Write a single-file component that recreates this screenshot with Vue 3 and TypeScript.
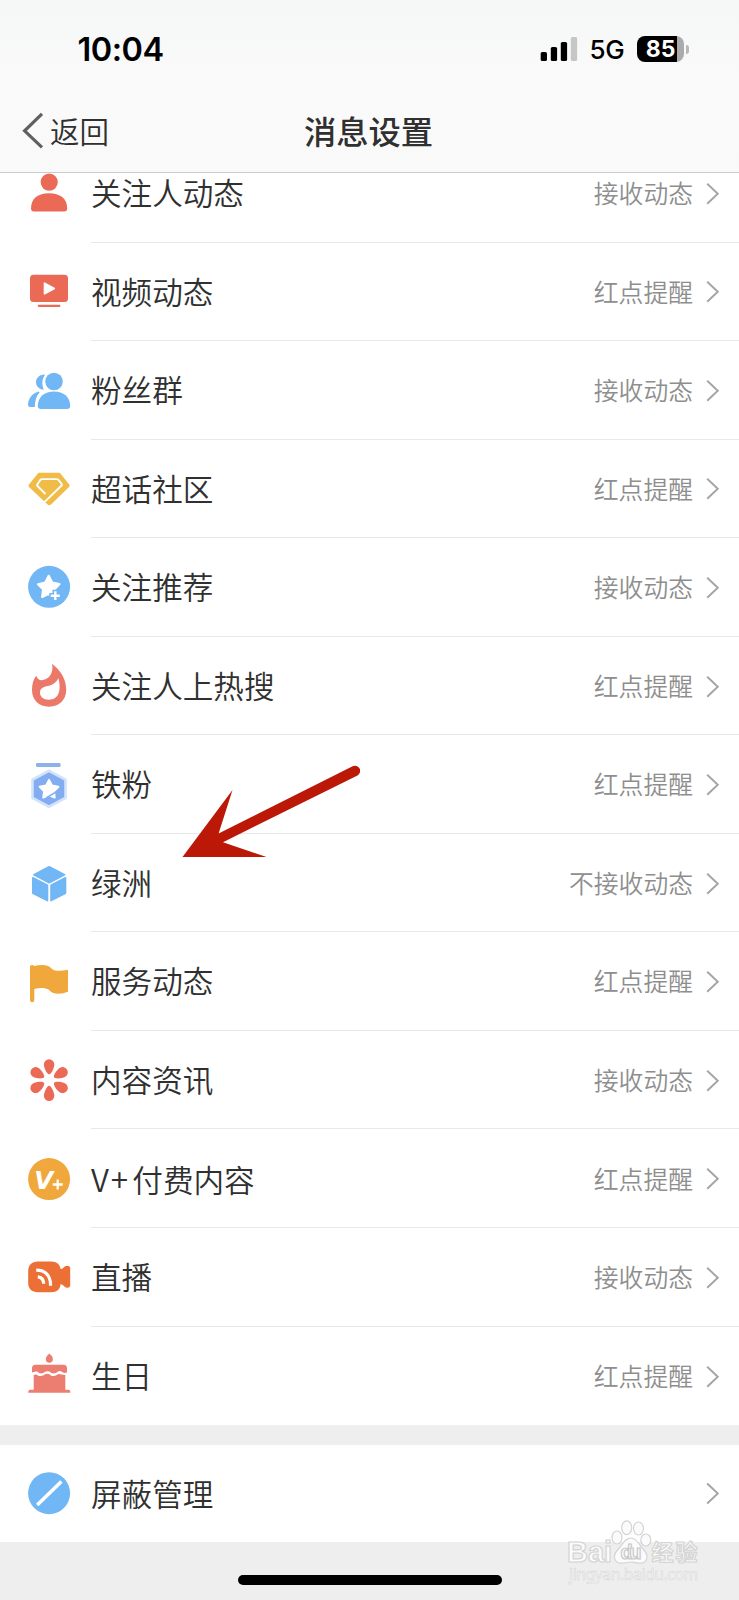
<script setup lang="ts">
interface Row {
  icon: string
  prefix?: string
  label: string
  value: string
}

const rows: Row[] = [
  { icon: 'person', label: '关注人动态', value: '接收动态' },
  { icon: 'video', label: '视频动态', value: '红点提醒' },
  { icon: 'group', label: '粉丝群', value: '接收动态' },
  { icon: 'diamond', label: '超话社区', value: '红点提醒' },
  { icon: 'star', label: '关注推荐', value: '接收动态' },
  { icon: 'flame', label: '关注人上热搜', value: '红点提醒' },
  { icon: 'medal', label: '铁粉', value: '红点提醒' },
  { icon: 'cube', label: '绿洲', value: '不接收动态' },
  { icon: 'flag', label: '服务动态', value: '红点提醒' },
  { icon: 'flower', label: '内容资讯', value: '接收动态' },
  { icon: 'vplus', prefix: 'V+', label: '付费内容', value: '红点提醒' },
  { icon: 'live', label: '直播', value: '接收动态' },
  { icon: 'cake', label: '生日', value: '红点提醒' },
]
const petals = [0, 60, 120, 180, 240, 300]
</script>

<template>
  <div class="screen">
    <header class="header">
      <div class="status">
        <span class="time">10:04</span>
        <div class="indicators">
          <svg class="signal" width="38" height="26" viewBox="0 0 38 26">
            <rect x="0.7" y="16" width="6.3" height="9" rx="1.6" />
            <rect x="10.8" y="11" width="6.3" height="14" rx="1.6" />
            <rect x="20.8" y="6" width="6.3" height="19" rx="1.6" />
            <rect x="30.8" y="1" width="6.3" height="24" rx="1.6" fill="#c6c6c6" />
          </svg>
          <span class="network">5G</span>
          <div class="battery"><span>85</span></div>
          <i class="battery-cap"></i>
        </div>
      </div>
      <nav class="nav">
        <div class="back">
          <svg width="22" height="38" viewBox="0 0 22 38">
            <path d="M20 2.8 L2.6 19.8 L20 36.3" fill="none" stroke="#606060" stroke-width="3.2" />
          </svg>
          <span>返回</span>
        </div>
        <h1>消息设置</h1>
      </nav>
    </header>

    <main class="list">
      <div v-for="row in rows" :key="row.label" class="row">
        <svg class="icon" width="48" height="48" viewBox="0 0.5 48 48">
          <g v-if="row.icon === 'person'" fill="#eb6a56">
            <circle cx="24.2" cy="13.6" r="8.6" />
            <path d="M6 40 C6 30 13 24.8 24 24.8 S42.2 30 42.2 40 Q42.2 43 39 43 H9 Q6 43 6 40Z" />
          </g>
          <g v-else-if="row.icon === 'video'">
            <rect x="5" y="7.2" width="38" height="27.3" rx="3.5" fill="#eb6a56" />
            <path d="M19.5 15.6 L29.3 21 L19.5 26.4Z" fill="#fff" stroke="#fff" stroke-width="1.6" stroke-linejoin="round" />
            <rect x="12.8" y="37.2" width="22.6" height="2.2" rx="1" fill="#eb6a56" />
          </g>
          <g v-else-if="row.icon === 'group'" fill="#71b6f5">
            <path d="M19.4 9 C14.8 9 11 12.2 11 16.6 C11 20.8 14.2 24 18.8 24.2 C16.7 19 16.8 13.5 20 9.4Z" />
            <circle cx="29" cy="16" r="8.8" />
            <path d="M13.5 26 C7 28 3 33.5 3 39.5 Q3 41.6 5 41.6 H9.8 C10.2 35 11 31 14.6 27Z" />
            <path d="M12.8 40.4 C12.8 31.5 19.5 26 29 26 S45.2 31.5 45.2 40.4 Q45.2 43.4 42 43.4 H16 Q12.8 43.4 12.8 40.4Z" />
          </g>
          <g v-else-if="row.icon === 'diamond'">
            <path d="M13.5 8.2 H34.8 L44.2 20 Q45.2 21.3 44 22.6 L26 40 Q24 41.7 22.3 39.8 L4 22.6 Q2.8 21.3 4 20Z" fill="#f0bb46" />
            <path d="M19.4 37.6 L36.6 21 Q37.3 20.2 36.6 19.4 L33.2 15.2 Q32.7 14.6 31.8 14.6 H17 Q16 14.6 15.4 15.4 L12.3 20 Q11.8 20.8 12.5 21.5 L20 29" fill="none" stroke="#fff" stroke-width="1.9" stroke-linecap="round" />
          </g>
          <g v-else-if="row.icon === 'star'">
            <circle cx="24.1" cy="24.3" r="21" fill="#71b6f5" />
            <path d="M23.7 13.3 L27.2 20 L34.5 21.5 L29.5 26.8 L29 34 L23.7 31.2 L17.2 34.4 L18.1 26.8 L13 21.7 L20.3 20Z" fill="#fff" stroke="#fff" stroke-width="2.2" stroke-linejoin="round" />
            <path d="M30.3 27.3 V40 M24.3 33.2 H36.5" stroke="#71b6f5" stroke-width="5.6" />
            <path d="M30.3 28.8 V37.6 M25.8 33.2 H34.8" stroke="#fff" stroke-width="2.4" />
          </g>
          <g v-else-if="row.icon === 'flame'">
            <path d="M27 2.3 C35 8.5 41.2 17 41.2 28.3 C41.2 38.5 34.3 45.2 24 45.2 S7 38.5 7 28.3 C7 22.5 8.5 17.5 11.2 14.2 C12.8 18.5 15.6 19.2 19 18.3 C26 16.3 28.6 9.2 27 2.3Z" fill="#eb7869" />
            <path d="M33.5 16.7 C36 27 35 38.2 23.6 38.2 C18.5 38.2 15 35 15 31.2 C15 26.5 18.5 25.5 23 24.6 C27.8 23.6 31.4 20.5 33.5 16.7Z" fill="#fff" />
          </g>
          <g v-else-if="row.icon === 'medal'">
            <rect x="11" y="2.6" width="24.5" height="3.8" rx="1.2" fill="#8bb3e8" />
            <path d="M24 10 L40.8 19 V37.5 L24 46.5 L7.2 37.5 V19Z" fill="#d2e3fb" stroke="#d2e3fb" stroke-width="2" stroke-linejoin="round" />
            <path d="M24 12.8 L38.4 20.5 V36 L24 43.7 L9.6 36 V20.5Z" fill="#82adf0" stroke="#82adf0" stroke-width="1.6" stroke-linejoin="round" />
            <path d="M24 19.4 L27 25 L33.4 26.3 L29 30.8 L29.7 37 L24 34.5 L18.3 37 L19.1 30.8 L14.7 26.3 L21.1 25Z" fill="#fff" stroke="#fff" stroke-width="2" stroke-linejoin="round" />
            <path d="M21.5 37.2 L34.5 29.5" stroke="#82adf0" stroke-width="1.5" />
          </g>
          <g v-else-if="row.icon === 'cube'" fill="#71b6f5" stroke="#71b6f5" stroke-width="1.8" stroke-linejoin="round">
            <path d="M24.2 8.4 L39.5 16.3 L24.2 24.2 L9 16.3Z" />
            <path d="M7.9 19.3 L22.4 26.7 V42 L7.9 34.6Z" />
            <path d="M40.4 19.3 L26.1 26.7 V42 L40.4 34.6Z" />
          </g>
          <path
            v-else-if="row.icon === 'flag'"
            d="M5 9.2 Q5 7.4 7 7.4 Q8.5 7.4 9 8.6 C17 6.5 24 7 27.5 12 C31 14 37 13.2 42 12.2 Q43 12 43 13.2 V34.3 C36 37.2 27 37.3 24 32.3 C20 30 14 30.4 9.3 31.5 V42.8 Q9.3 44.8 7.2 44.8 Q5 44.8 5 42.8Z"
            fill="#f0a73c"
          />
          <g v-else-if="row.icon === 'flower'" fill="#eb6a56">
            <path
              v-for="angle in petals"
              :key="angle"
              :transform="`rotate(${angle} 24.1 24.6)`"
              d="M24.1 18.9 C22 18.9 18.9 12.5 18.9 9 A5.2 5.2 0 0 1 29.3 9 C29.3 12.5 26.2 18.9 24.1 18.9Z"
            />
          </g>
          <g v-else-if="row.icon === 'vplus'">
            <circle cx="24.1" cy="24.6" r="21" fill="#f0a73c" />
            <text x="9.2" y="34.3" class="v-mark">V</text>
            <path d="M32.7 25 V35 M27.7 30 H37.7" stroke="#fff" stroke-width="2.3" />
          </g>
          <g v-else-if="row.icon === 'live'">
            <path d="M13 9 H26 C32 9 35 12 35.6 16.5 C38 17 39 13.5 42 13.3 Q45.2 13.2 45.2 16 V32.5 Q45.2 35.5 42 35.2 C39 34.8 38 31.5 35.6 31.8 C35 37 32 39.8 26 39.8 H13 C6.5 39.8 3.2 36 3.2 30.5 V18.5 C3.2 13 6.5 9 13 9Z" fill="#ec7036" />
            <path d="M11.2 17.7 C20.5 17.7 25.6 23 25.6 33.2 M12.8 24.3 C16.8 24.5 18.5 26.5 18.7 31.2" fill="none" stroke="#fff" stroke-width="3.2" />
          </g>
          <g v-else-if="row.icon === 'cake'" fill="#eb7d71">
            <path d="M24.3 2 C26.2 3.5 27.9 5.2 27.9 7.6 A3.5 3.7 0 0 1 20.8 7.6 C20.8 5.2 22.6 3.5 24.3 2Z" />
            <path d="M10.5 13.3 H38.5 Q42 13.3 42 16.8 V21 Q38.5 22.2 36.5 20 Q34 18.7 31 21.6 Q27.3 23 24.3 20 Q21 18.8 18.2 21.6 Q14.5 22.8 12.2 20 Q10 19.8 7 21 V16.8 Q7 13.3 10.5 13.3Z" />
            <path d="M8.7 23.4 Q11.3 22.4 13.2 24.2 Q17 25.3 20.6 22.6 Q24 21.6 26.2 24.2 Q30 25.2 33.4 22.5 Q36.6 22.8 40.3 23.5 V38.3 H43.4 Q45.4 38.3 45.4 41.3 H3.2 Q3.2 38.3 5.2 38.3 H8.7Z" />
          </g>
        </svg>
        <div class="body">
          <span class="label"><span v-if="row.prefix" class="prefix">{{ row.prefix }}</span>{{ row.label }}</span>
          <span class="value">{{ row.value }}</span>
          <svg class="chevron" width="14" height="24" viewBox="0 0 14 24">
            <path d="M1.2 2.8 L11.8 12.8 L1.2 22.8" fill="none" stroke="#a4a4a4" stroke-width="1.9" />
          </svg>
        </div>
      </div>
    </main>

    <section class="block-row row">
      <svg class="icon" width="48" height="48" viewBox="0 0 48 48">
        <circle cx="24.1" cy="24.2" r="21" fill="#71b6f5" />
        <path d="M12.2 36 L36.4 12.4" stroke="#fff" stroke-width="3.5" />
      </svg>
      <div class="body">
        <span class="label">屏蔽管理</span>
        <svg class="chevron" width="14" height="24" viewBox="0 0 14 24">
          <path d="M1.2 2.5 L11.8 12.5 L1.2 22.5" fill="none" stroke="#a4a4a4" stroke-width="1.9" />
        </svg>
      </div>
    </section>

    <svg class="pointer" width="180" height="100" viewBox="0 0 180 100">
      <path d="M2.5 97 L52.5 30 L38.6 73.5 L172.6 6.3 A5.1 5.1 0 0 1 177.5 15.4 L43 82.2 L86.5 97Z" fill="#bb1808" />
    </svg>

    <svg class="watermark" width="139" height="70" viewBox="0 0 139 70">
      <g fill="#fbfbfb" stroke="#d4d4d4" stroke-width="1.2">
        <ellipse cx="57" cy="22.5" rx="5" ry="6.5" />
        <ellipse cx="66.7" cy="12.8" rx="5" ry="6.9" />
        <ellipse cx="78.5" cy="13.5" rx="5" ry="6.5" />
        <ellipse cx="85.8" cy="25" rx="5" ry="6" />
        <path d="M71 23 C77 23 79 30 83 34 C90 41 87 48.5 79.5 48.2 C75 48 73.5 47 71 47 S66 48 62 48.2 C54.5 48.5 51.5 41 58 34.5 C62.5 30 64.5 23 71 23Z" />
        <text x="7" y="46.8" class="wm-logo" textLength="45">Bai</text>
        <text x="60.5" y="43.8" class="wm-du" textLength="21">du</text>
        <text x="91.5" y="45.4" class="wm-cn" textLength="46">经验</text>
      </g>
      <text x="9" y="64.5" class="wm-url" textLength="129">jingyan.baidu.com</text>
    </svg>
    <div class="home-bar"></div>
  </div>
</template>

<style>
body {
  margin: 0;
}
</style>

<style scoped>
.screen {
  position: relative;
  width: 739px;
  height: 1600px;
  overflow: hidden;
  background: #eeeeee;
  color: #303030;
  font-family: "Noto Sans CJK SC", sans-serif;
}
.header {
  position: relative;
  z-index: 1;
  box-sizing: border-box;
  height: 173px;
  background: linear-gradient(#f6f7f7, #fafafa 55%, #f9f9f9);
  border-bottom: 1px solid #cbcbcb;
}
.status {
  display: flex;
  justify-content: space-between;
  align-items: center;
  height: 98px;
  padding: 0 50px 0 77.5px;
  color: #000;
  font-family: Inter, sans-serif;
}
.time {
  font-size: 32.5px;
  font-weight: 600;
  letter-spacing: -0.5px;
}
.indicators {
  display: flex;
  align-items: center;
}
.network {
  margin-left: 11.5px;
  width: 38px;
  font-size: 26px;
  font-weight: 500;
  letter-spacing: -0.2px;
}
.battery {
  display: flex;
  align-items: center;
  justify-content: center;
  width: 47px;
  height: 26px;
  margin-left: 9.5px;
  border-radius: 8px;
  background: linear-gradient(90deg, #000 40.5px, #ababab 40.5px);
  color: #fff;
  font-size: 23px;
  font-weight: 700;
}
.battery-cap {
  width: 2.5px;
  height: 9px;
  margin-left: 2px;
  margin-right: 0.5px;
  border-radius: 0 3px 3px 0;
  background: #b8b8b8;
}
.nav {
  display: grid;
  grid-template-columns: 1fr auto 1fr;
  align-items: center;
  height: 64px;
}
.back {
  display: flex;
  align-items: center;
  gap: 6px;
  padding-left: 22px;
  font-size: 29.5px;
  font-weight: 350;
}
.nav h1 {
  margin: 0;
  padding-right: 2px;
  font-size: 32.3px;
  font-weight: 500;
}
.list {
  margin-top: -29px;
  background: #fff;
}
.row {
  display: flex;
  align-items: center;
  height: 98.55px;
  padding-left: 25px;
  background: #fff;
}
.icon {
  flex: none;
}
.body {
  display: flex;
  align-items: center;
  flex: 1;
  box-sizing: border-box;
  height: 100%;
  margin-left: 18px;
  padding-right: 19px;
  border-bottom: 1px solid #e8e8e8;
}
.row:last-child .body,
.block-row .body {
  border-bottom: 0;
}
.label {
  flex: 1;
  padding-bottom: 1.4px;
  font-size: 30.6px;
  font-weight: 350;
}
.prefix {
  margin-right: 2.5px;
  font-size: 31.5px;
  letter-spacing: 1.8px;
}
.value {
  padding-bottom: 1.4px;
  color: #8e8e8e;
  font-size: 24.8px;
  font-weight: 350;
}
.chevron {
  margin-left: 13px;
}
.block-row {
  height: 97.3px;
  margin-top: 19.7px;
}
.v-mark {
  fill: #fff;
  font: italic 700 24.5px "DejaVu Sans", sans-serif;
}
.pointer {
  position: absolute;
  left: 180px;
  top: 760px;
}
.watermark {
  position: absolute;
  left: 560px;
  top: 1515px;
}
.wm-logo {
  font: 700 29px "Liberation Sans", sans-serif;
}
.wm-du {
  font: 700 20px "Liberation Sans", sans-serif;
  stroke: #c8c8c8;
}
.wm-cn {
  font: 700 22px "Noto Sans CJK SC", sans-serif;
}
.wm-url {
  font: 400 15.5px "Noto Sans", sans-serif;
  fill: #fafafa;
  stroke: #d2d2d2;
  stroke-width: 0.5px;
}
.home-bar {
  position: absolute;
  left: 238px;
  bottom: 15px;
  width: 264px;
  height: 10px;
  border-radius: 5px;
  background: #000;
}
</style>
